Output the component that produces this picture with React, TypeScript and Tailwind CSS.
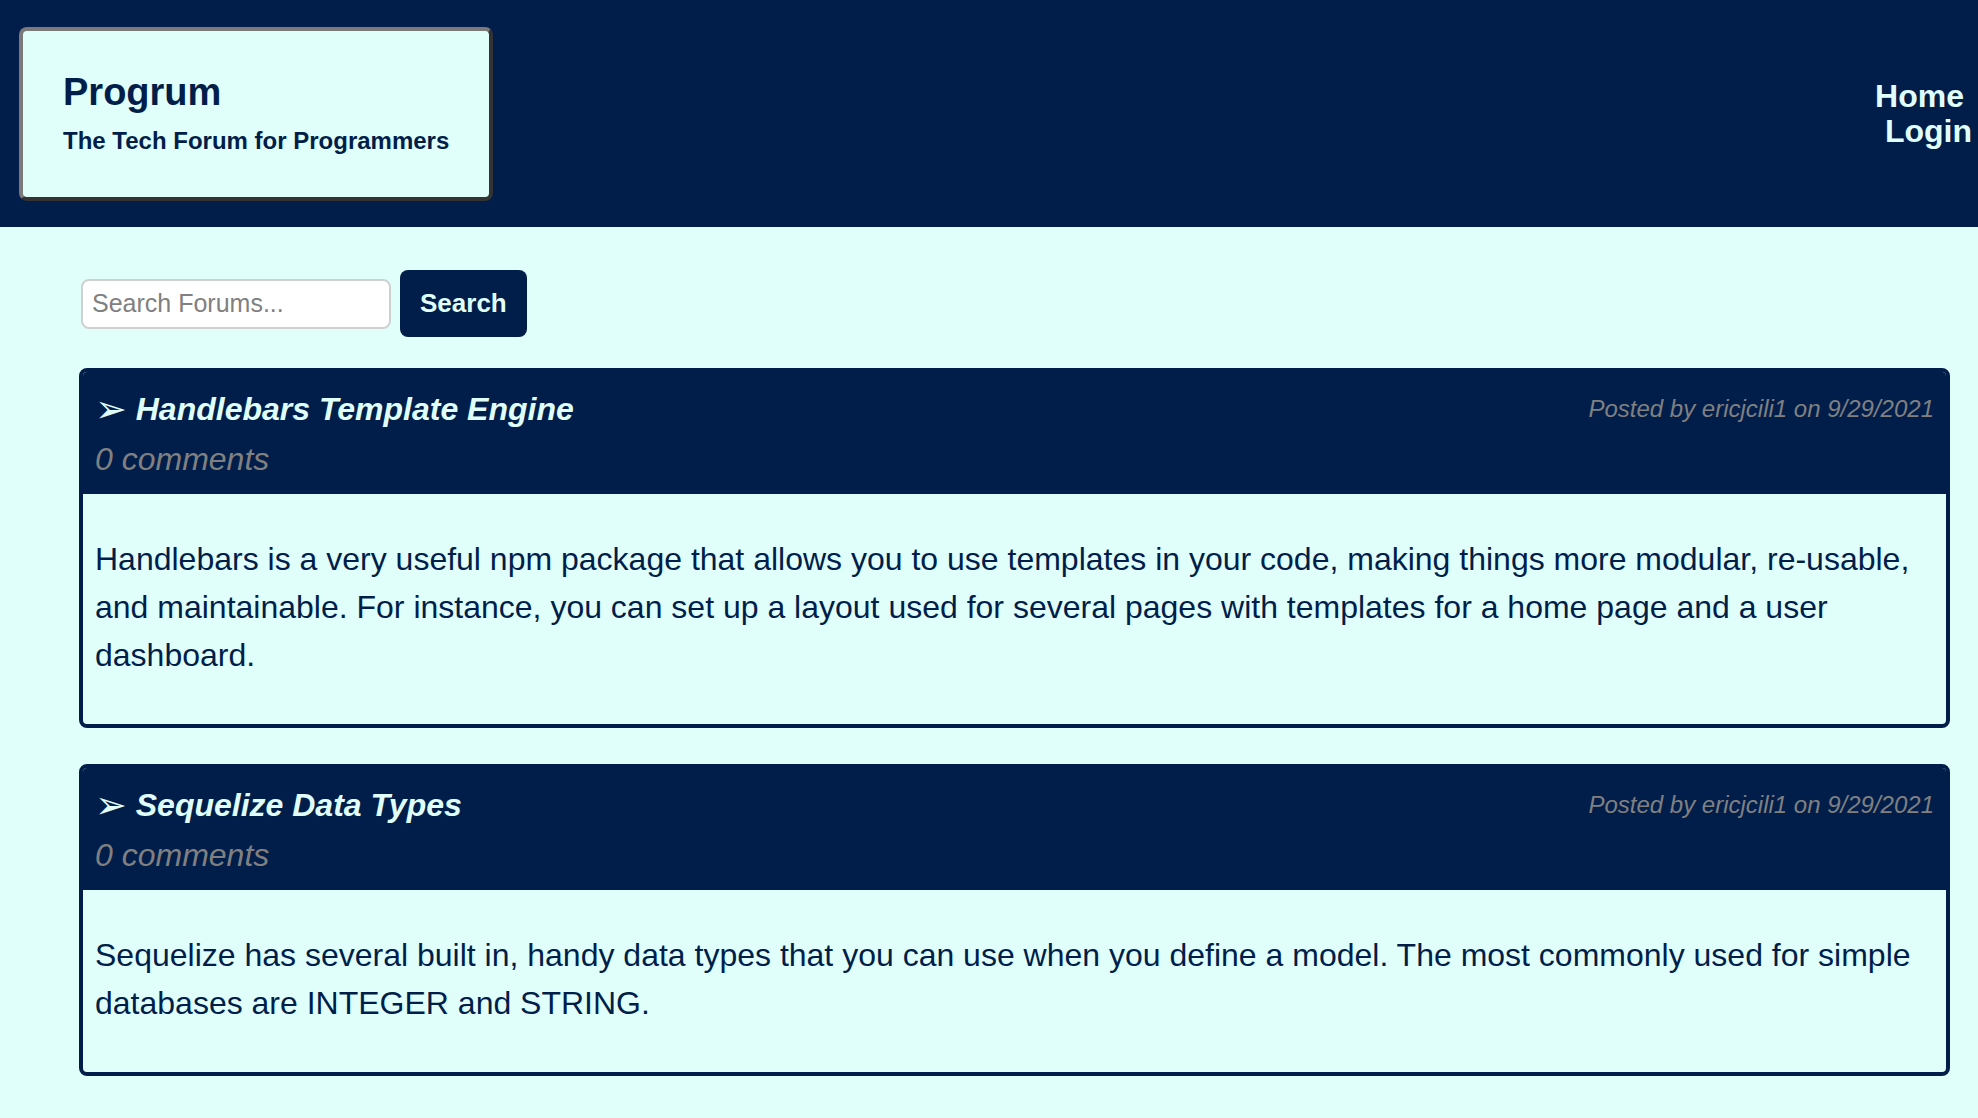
const posts = [
  {
    title: 'Handlebars Template Engine',
    author: 'ericjcili1',
    date: '9/29/2021',
    comments: 0,
    body: 'Handlebars is a very useful npm package that allows you to use templates in your code, making things more modular, re-usable, and maintainable. For instance, you can set up a layout used for several pages with templates for a home page and a user dashboard.',
  },
  {
    title: 'Sequelize Data Types',
    author: 'ericjcili1',
    date: '9/29/2021',
    comments: 0,
    body: 'Sequelize has several built in, handy data types that you can use when you define a model. The most commonly used for simple databases are INTEGER and STRING.',
  },
];

function Header() {
  return (
    <header className="h-[227px] bg-[#011e4b] flex items-center justify-between pl-[19px] pr-[6px]">
      {/* Logo box */}
      <div className="rounded-lg border-4 border-t-[#7a7a7a] border-l-[#7a7a7a] border-r-[#333333] border-b-[#333333] bg-[#e0fffa] px-[40px] pt-[39px] pb-[42px]">
        <h1 className="text-[38px] font-bold leading-[44px]">Progrum</h1>
        <p className="mt-[13px] text-[24px] font-bold leading-[28px]">The Tech Forum for Programmers</p>
      </div>
      <nav className="flex flex-col items-end text-[32px] font-bold leading-[35px] text-[#e0fffa]">
        <a href="#" className="mr-[8px]">Home</a>
        <a href="#">Login</a>
      </nav>
    </header>
  );
}

function PostCard({ post }: { post: (typeof posts)[number] }) {
  return (
    <div className="rounded-lg border-4 border-[#011e4b] overflow-hidden">
      <div className="bg-[#011e4b] px-3 pt-[19px] pb-[17px]">
        <div className="flex items-center justify-between">
          <h2 className="text-[32px] font-bold italic leading-[36px] text-[#e0fffa]">
            <span className="font-['DejaVu_Sans',sans-serif] not-italic text-[38px] leading-[0] align-[-2px]">➢</span> {post.title}
          </h2>
          <span className="text-[24px] italic text-[#808080]">
            Posted by {post.author} on {post.date}
          </span>
        </div>
        <p className="mt-[14px] text-[32px] italic leading-[36px] text-[#808080]">{post.comments} comments</p>
      </div>
      <div className="px-3 pt-[41px] pb-[45px]">
        <p className="text-[32px] leading-[48px]">{post.body}</p>
      </div>
    </div>
  );
}

export default function App() {
  return (
    <div className="min-h-screen bg-[#e0fffa] text-[#011e4b] font-['Liberation_Sans',Arial,sans-serif]">
      <Header />
      <main className="pl-[79px] pr-[28px] pt-[43px] pb-[40px]">
        <form className="flex items-center gap-[9px] pl-[2px]" onSubmit={(e) => e.preventDefault()}>
          <input
            type="text"
            placeholder="Search Forums..."
            className="w-[310px] h-[50px] rounded-lg border-2 border-[#d0d0d0] bg-white px-[9px] text-[25px] outline-none placeholder:text-[#808080]"
          />
          <button className="h-[67px] px-[20px] rounded-lg bg-[#011e4b] text-[26px] font-bold text-[#e0fffa]">
            Search
          </button>
        </form>
        <div className="mt-[31px] flex flex-col gap-[36px]">
          {posts.map((p) => (
            <PostCard key={p.title} post={p} />
          ))}
        </div>
      </main>
    </div>
  );
}
